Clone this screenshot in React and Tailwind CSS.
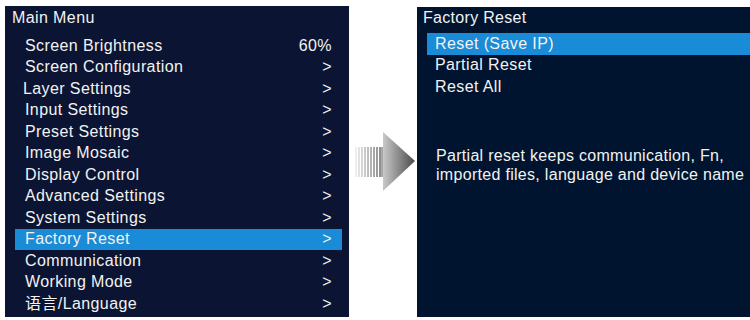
const mainItems = [
  { label: "Screen Brightness", value: "60%" },
  { label: "Screen Configuration", value: ">" },
  { label: "Layer Settings", value: ">", tight: true },
  { label: "Input Settings", value: ">" },
  { label: "Preset Settings", value: ">" },
  { label: "Image Mosaic", value: ">" },
  { label: "Display Control", value: ">" },
  { label: "Advanced Settings", value: ">" },
  { label: "System Settings", value: ">" },
  { label: "Factory Reset", value: ">", active: true },
  { label: "Communication", value: ">" },
  { label: "Working Mode", value: ">" },
  { label: "语言/Language", value: ">" },
];

const resetItems = ["Reset (Save IP)", "Partial Reset", "Reset All"];

const Arrow = () => (
  <svg width="62" height="62" viewBox="0 0 62 62" className="shrink-0">
    <defs>
      <linearGradient id="head" x1="0" x2="1" y1="0" y2="0">
        <stop offset="0" stopColor="#c9c9c9" />
        <stop offset="1" stopColor="#4a4a4a" />
      </linearGradient>
    </defs>
    {[0, 3, 6, 9, 12, 15, 18, 21, 24].map((x, i) => (
      <rect key={x} x={x} y="15" width="2" height="30" fill="#8a8a8a" opacity={0.15 + i * 0.1} />
    ))}
    <rect x="26" y="15" width="3" height="30" fill="#a9a9a9" />
    <polygon points="28,0 60,29 28,59" fill="url(#head)" />
  </svg>
);

export default function App() {
  return (
    <div
      className="w-[750px] h-[320px] bg-white flex items-start overflow-hidden"
      style={{ fontFamily: '"Liberation Sans", "Noto Sans CJK SC", sans-serif' }}
    >
      {/* Main menu panel */}
      <div className="ml-[5px] mt-[6px] w-[344px] h-[311px] bg-[#0b1533] text-[#f2f2f2] shrink-0">
        <div className="h-[22px] pl-[7px] pt-[2px] text-[16px] tracking-[0.4px] leading-[20px]">Main Menu</div>
        <div className="pt-[7px]">
          {mainItems.map((item) => (
            <div
              key={item.label}
              className={`h-[21.5px] ml-[10px] mr-[7px] flex items-center justify-between pr-[10px] text-[16px] tracking-[0.4px] leading-none ${item.tight ? "pl-[8px]" : "pl-[10px]"} ${item.active ? "bg-[#1a8bd6]" : ""}`}
            >
              <span>{item.label}</span>
              <span>{item.value}</span>
            </div>
          ))}
        </div>
      </div>

      {/* Arrow */}
      <div className="mt-[132px] ml-[6px]">
        <Arrow />
      </div>

      {/* Factory reset panel */}
      <div className="mt-[7px] flex-1 h-[310px] bg-[#00142f] text-[#f2f2f2]">
        <div className="h-[20px] pl-[6px] pt-[1px] text-[16px] tracking-[0.3px] leading-[20px]">Factory Reset</div>
        <div className="pt-[6px]">
          {resetItems.map((label, i) => (
            <div
              key={label}
              className={`h-[21.5px] ml-[10px] pl-[8px] flex items-center text-[16px] tracking-[0.4px] leading-none ${i === 0 ? "bg-[#1a8bd6]" : ""}`}
            >
              {label}
            </div>
          ))}
        </div>
        <div className="mt-[48px] pl-[19px] text-[16px] tracking-[0.3px] leading-[19px] whitespace-nowrap">
          Partial reset keeps communication, Fn,
          <br />
          imported files, language and device name
        </div>
      </div>
    </div>
  );
}
